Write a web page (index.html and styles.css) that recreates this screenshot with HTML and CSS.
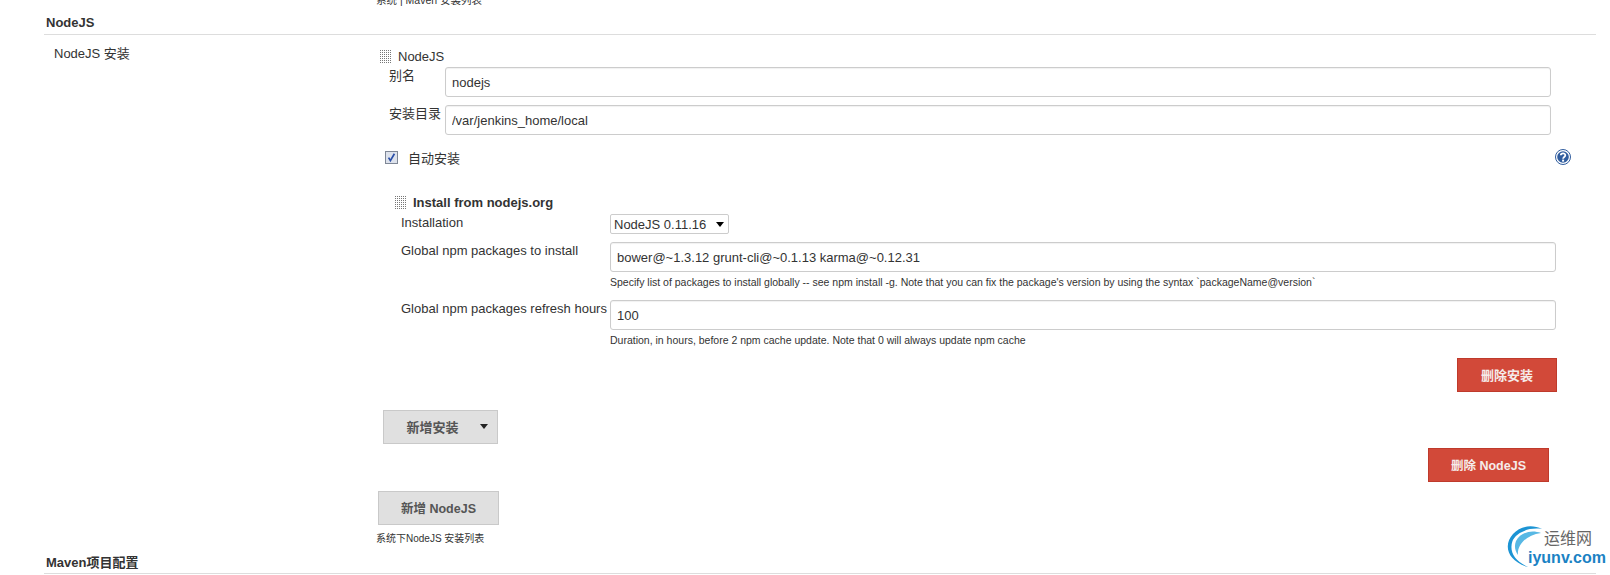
FILE: index.html
```html
<!DOCTYPE html>
<html lang="zh">
<head>
<meta charset="utf-8">
<title>NodeJS</title>
<link rel="stylesheet" href="styles.css">
</head>
<body>
<div class="page">
  <div class="top-note"><span>系统 | Maven 安装列表</span></div>
  <h2 class="section-title">NodeJS</h2>
  <div class="section-row">
    <div class="section-label">NodeJS 安装</div>
    <div class="section-body">
      <div class="outer-head"><i class="handle"></i><span>NodeJS</span></div>
      <div class="outer-fields">
        <label class="field-label">别名</label>
        <input class="text-input" type="text" value="nodejs">
        <label class="field-label">安装目录</label>
        <input class="text-input" type="text" value="/var/jenkins_home/local">
      </div>
      <div class="check-row">
        <span class="check-left">
          <svg class="check" viewBox="0 0 13 13" width="13" height="13" aria-hidden="true">
            <rect x=".5" y=".5" width="12" height="12" fill="#dde2ec" stroke="#7f8796"/>
            <path d="M3.6 6.6 5.4 9.6 9.4 2.8" fill="none" stroke="#2b4fa8" stroke-width="1.7"/>
          </svg>
          <span>自动安装</span>
        </span>
        <svg class="help" viewBox="0 0 16 16" width="16" height="16" aria-hidden="true">
          <circle cx="8" cy="8" r="7.5" fill="#fff" stroke="#2f5c9e"/>
          <circle cx="8" cy="8" r="5.8" fill="#2f5c9e"/>
          <path d="M5.8 6.2C5.9 3.8 10.4 3.8 10.3 6.3 10.3 8 8.2 8 8.1 9.7" fill="none" stroke="#fff" stroke-width="1.8"/>
          <rect x="7.1" y="10.6" width="2" height="2" fill="#fff"/>
        </svg>
      </div>
      <div class="inner-head"><i class="handle"></i><strong>Install from nodejs.org</strong></div>
      <div class="inner-fields">
        <label class="inner-label">Installation</label>
        <div class="select-wrap">
          <select class="select"><option>NodeJS 0.11.16</option></select>
        </div>
        <label class="inner-label">Global npm packages to install</label>
        <div class="field-stack">
          <input class="text-input" type="text" value="bower@~1.3.12 grunt-cli@~0.1.13 karma@~0.12.31">
          <p class="help-text">Specify list of packages to install globally -- see npm install -g. Note that you can fix the package's version by using the syntax `packageName@version`</p>
        </div>
        <label class="inner-label">Global npm packages refresh hours</label>
        <div class="field-stack">
          <input class="text-input" type="text" value="100">
          <p class="help-text">Duration, in hours, before 2 npm cache update. Note that 0 will always update npm cache</p>
        </div>
      </div>
      <div class="del-install-row"><button class="btn btn-red btn-del-install" type="button">删除安装</button></div>
      <button class="btn btn-grey btn-add-install" type="button">新增安装<i class="caret"></i></button>
      <div class="del-node-row"><button class="btn btn-red btn-node" type="button">删除 NodeJS</button></div>
      <button class="btn btn-grey btn-node" type="button">新增 NodeJS</button>
      <p class="list-note">系统下NodeJS 安装列表</p>
    </div>
  </div>
  <h2 class="section-title section-next">Maven项目配置</h2>
  <div class="watermark">
    <svg class="watermark-arc" viewBox="0 0 40 42" width="40" height="42" aria-hidden="true">
      <path d="M36 3C26-2 14 0 7 8-3 19 1 35 22 41 8 35 3 25 6.500 15 10 7 22 1 36 3Z" fill="#1c94d4"/>
      <path d="M35 7C25 3 14 7 10 15 8 20 9 25 12 29 11 19 20 9 35 7Z" fill="#58b8e4"/>
    </svg>
    <div class="watermark-text">
      <span class="watermark-cn">运维网</span>
      <span class="watermark-en">iyunv.com</span>
    </div>
  </div>
</div>
</body>
</html>
```
FILE: styles.css
```css
* { box-sizing: border-box; }
html, body { margin: 0; padding: 0; background: #fff; }
body {
  font-family: "Liberation Sans", "Noto Sans CJK SC", sans-serif;
  font-size: 13px;
  color: #333;
}
.page {
  position: relative;
  height: 575px;
  overflow: hidden;
  padding: 0 14px 0 44px;
}
.top-note {
  height: 6px;
  margin-left: 332px;
  display: flex;
  align-items: flex-end;
  font-size: 10.5px;
  line-height: 12px;
  color: #333;
}
.top-note span { display: block; white-space: nowrap; }
.section-title {
  margin: 0;
  height: 29px;
  padding: 9px 0 0 2px;
  font-size: 13px;
  line-height: 16px;
  font-weight: bold;
  color: #333;
  border-bottom: 1px solid #ddd;
}
.section-next { height: 32px; padding-top: 13px; }
.section-row { display: flex; height: 507px; }
.section-label {
  width: 332px;
  flex: none;
  padding: 11px 0 0 10px;
  line-height: 16px;
}
.section-body { flex: 1; padding-top: 13px; min-width: 0; }
.handle {
  display: block;
  width: 13px;
  height: 14px;
  flex: none;
  background:
    linear-gradient(#fff 1px, transparent 1px) 0 0 / 2px 2px,
    linear-gradient(90deg, #fff 1px, transparent 1px) 0 0 / 2px 2px,
    #777;
}
.outer-head {
  display: flex;
  align-items: center;
  gap: 6px;
  height: 16px;
  margin: 0 0 3px 3px;
}
.outer-fields {
  display: grid;
  grid-template-columns: 56px 1106px;
  row-gap: 8px;
  margin-left: 13px;
}
.field-label { line-height: 16px; padding-top: 1px; }
.text-input {
  display: block;
  width: 100%;
  height: 30px;
  padding: 0 6px;
  font: inherit;
  color: #333;
  background: #fff;
  border: 1px solid #ccc;
  border-radius: 3px;
  box-shadow: inset 0 1px 1px rgba(0, 0, 0, .06);
  outline: none;
}
.check-row {
  display: flex;
  align-items: center;
  justify-content: space-between;
  width: 1186px;
  height: 18px;
  margin: 13px 0 0 9px;
}
.check-left { display: flex; align-items: center; gap: 10px; }
.check, .help { display: block; flex: none; }
.inner-head {
  display: flex;
  align-items: center;
  gap: 6px;
  height: 16px;
  margin: 28px 0 0 18px;
}
.inner-head strong { font-weight: bold; font-size: 13px; }
.inner-fields {
  display: grid;
  grid-template-columns: 209px 946px;
  margin: 4px 0 0 25px;
}
.inner-label { line-height: 16px; padding-top: 1px; white-space: nowrap; }
.select-wrap {
  position: relative;
  width: 119px;
  height: 20px;
  margin-bottom: 8px;
}
.select-wrap::after {
  content: "";
  position: absolute;
  right: 5px;
  top: 8px;
  border: 4px solid transparent;
  border-top: 5px solid #000;
  border-bottom: 0;
  pointer-events: none;
}
.select {
  display: block;
  width: 100%;
  height: 20px;
  padding: 0 0 0 3px;
  font: inherit;
  color: #333;
  background: #fff;
  border: 1px solid #ccc;
  border-radius: 2px;
  appearance: none;
  outline: none;
}
.field-stack { height: 58px; }
.help-text {
  margin: 3px 0 0;
  font-size: 10.5px;
  line-height: 14px;
  color: #333;
  white-space: nowrap;
}
.btn {
  display: block;
  height: 34px;
  padding: 0 0 2px;
  font-family: inherit;
  font-size: 13px;
  font-weight: bold;
  text-align: center;
  border-radius: 0;
  border-width: 1px;
  border-style: solid;
}
.btn-grey { color: #555; background: #e0e0e0; border-color: #c9c9c9; }
.btn-red { color: #f5ecea; background: #d24939; border-color: #bf3a2b; }
.del-install-row { margin: 0 0 0 1081px; }
.btn-del-install { width: 100px; }
.btn-add-install {
  position: relative;
  width: 115px;
  margin: 18px 0 0 7px;
  padding-right: 16px;
}
.caret {
  position: absolute;
  right: 9px;
  top: 13px;
  border: 4px solid transparent;
  border-top: 5px solid #222;
  border-bottom: 0;
}
.del-node-row { margin: 4px 0 9px 1052px; }
.btn-node { width: 121px; margin-left: 2px; font-size: 12.5px; }
.del-node-row .btn-node { margin-left: 0; }
.list-note {
  margin: 7px 0 0;
  font-size: 10px;
  line-height: 14px;
  color: #333;
}
.watermark {
  position: absolute;
  left: 1506px;
  top: 526px;
  width: 100px;
  height: 42px;
  display: flex;
}
.watermark-arc { display: block; flex: none; }
.watermark-text {
  display: flex;
  flex-direction: column;
  align-items: flex-end;
  margin-left: -18px;
  padding-top: 3px;
  white-space: nowrap;
}
.watermark-cn { font-size: 16px; line-height: 20px; color: #666; margin-right: 14px; }
.watermark-en { font-size: 16px; line-height: 18px; font-weight: bold; color: #1b82c4; }
```
